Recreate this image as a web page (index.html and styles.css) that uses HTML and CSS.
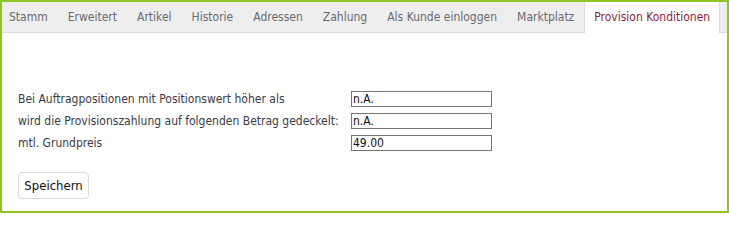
FILE: index.html
```html
<!DOCTYPE html>
<html lang="de">
<head>
<meta charset="utf-8">
<title>Provision Konditionen</title>
<link rel="stylesheet" href="styles.css">
</head>
<body>
<div class="panel">
  <ul class="tabs">
    <li class="tab first">Stamm</li>
    <li class="tab">Erweitert</li>
    <li class="tab">Artikel</li>
    <li class="tab">Historie</li>
    <li class="tab">Adressen</li>
    <li class="tab">Zahlung</li>
    <li class="tab">Als Kunde einloggen</li>
    <li class="tab">Marktplatz</li>
    <li class="tab active">Provision Konditionen</li>
  </ul>
  <div class="content">
    <div class="form">
      <label class="lbl" for="f1">Bei Auftragpositionen mit Positionswert höher als</label>
      <input class="inp" id="f1" type="text" value="n.A.">
      <label class="lbl" for="f2">wird die Provisionszahlung auf folgenden Betrag gedeckelt:</label>
      <input class="inp" id="f2" type="text" value="n.A.">
      <label class="lbl" for="f3">mtl. Grundpreis</label>
      <input class="inp" id="f3" type="text" value="49.00">
    </div>
    <button class="btn" type="button">Speichern</button>
  </div>
</div>
</body>
</html>
```
FILE: styles.css
```css
html, body {
  margin: 0;
  padding: 0;
  background: #fff;
}
body {
  font-family: "DejaVu Sans Condensed", "DejaVu Sans", sans-serif;
  font-size: 12px;
}
.panel {
  box-sizing: border-box;
  width: 729px;
  height: 213px;
  border: 2px solid #8fc31f;
  overflow: hidden;
}
.tabs {
  display: flex;
  margin: 0;
  padding: 0;
  list-style: none;
  height: 30px;
  background: #eeeeee;
  border-bottom: 1px solid #dcdcdc;
}
.tab {
  box-sizing: border-box;
  height: 30px;
  line-height: 30px;
  padding: 0 9px;
  border-left: 1px solid transparent;
  border-right: 1px solid transparent;
  color: #6a6a72;
  white-space: nowrap;
}
.tab.first {
  margin-left: -3px;
}
.tab.active {
  height: 31px;
  background: #fff;
  color: #8c1d40;
  border-left-color: #dcdcdc;
  border-right-color: #dcdcdc;
}
.content {
  padding: 58px 0 0 16px;
}
.form {
  display: grid;
  grid-template-columns: 333px 141px;
  row-gap: 6px;
  align-items: center;
}
.lbl {
  color: #3a3a44;
  line-height: 16px;
  white-space: nowrap;
}
.inp {
  box-sizing: border-box;
  width: 141px;
  height: 16px;
  margin: 0;
  padding: 0 1px;
  border: 1px solid #767676;
  font-family: "DejaVu Sans Condensed", "DejaVu Sans", sans-serif;
  font-size: 12px;
  color: #111;
  background: #fff;
}
.btn {
  box-sizing: border-box;
  margin-top: 21px;
  width: 71px;
  height: 27px;
  padding: 0;
  border: 1px solid #dadada;
  border-radius: 4px;
  background: #fff;
  font-family: "DejaVu Sans Condensed", "DejaVu Sans", sans-serif;
  font-size: 13px;
  color: #111;
}
```
